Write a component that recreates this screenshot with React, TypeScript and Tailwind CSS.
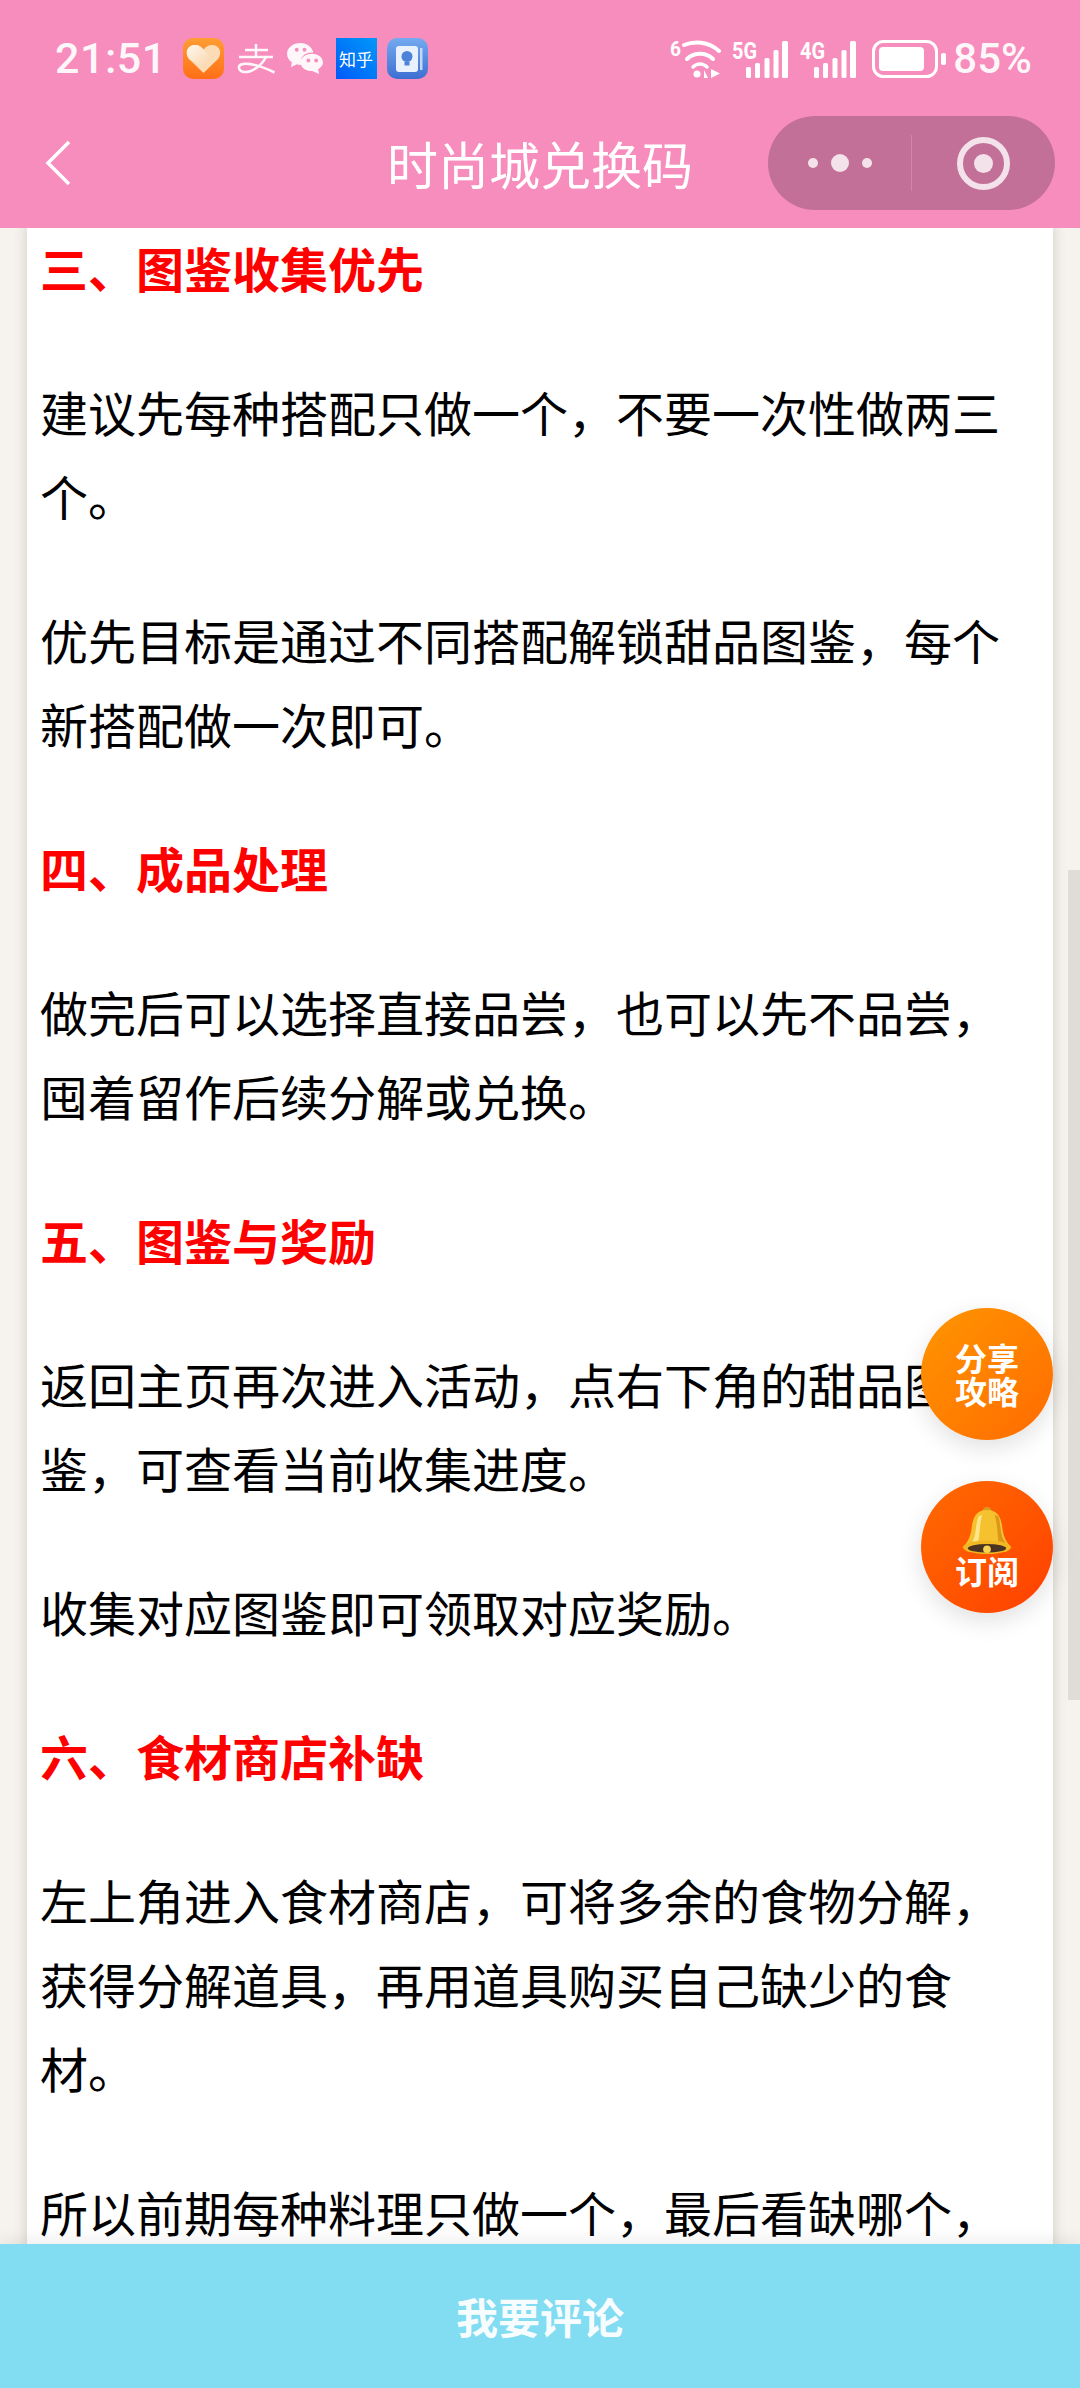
import React from "react";

const cjk = { fontFamily: '"Noto Sans CJK SC", "Noto Sans", sans-serif' };

type Block = { text: string; heading?: boolean };

const blocks: Block[] = [
  { text: "三、图鉴收集优先", heading: true },
  { text: "建议先每种搭配只做一个，不要一次性做两三个。" },
  { text: "优先目标是通过不同搭配解锁甜品图鉴，每个新搭配做一次即可。" },
  { text: "四、成品处理", heading: true },
  { text: "做完后可以选择直接品尝，也可以先不品尝，囤着留作后续分解或兑换。" },
  { text: "五、图鉴与奖励", heading: true },
  { text: "返回主页再次进入活动，点右下角的甜品图鉴，可查看当前收集进度。" },
  { text: "收集对应图鉴即可领取对应奖励。" },
  { text: "六、食材商店补缺", heading: true },
  { text: "左上角进入食材商店，可将多余的食物分解，获得分解道具，再用道具购买自己缺少的食材。" },
  { text: "所以前期每种料理只做一个，最后看缺哪个，再去兑换。" },
];

function AppIcons() {
  return (
    <div className="flex items-center">
      <svg width="41" height="41" viewBox="0 0 41 41">
        <defs>
          <linearGradient id="hg" x1="0" y1="0" x2="0" y2="1">
            <stop offset="0" stopColor="#ff9d33" />
            <stop offset="1" stopColor="#ff6f17" />
          </linearGradient>
          <linearGradient id="hw" x1="0" y1="0" x2="1" y2="1">
            <stop offset="0" stopColor="#fff8ef" />
            <stop offset="1" stopColor="#f9d3a6" />
          </linearGradient>
          <linearGradient id="nb" x1="0" y1="0" x2="0" y2="1">
            <stop offset="0" stopColor="#74aaf0" />
            <stop offset="1" stopColor="#3d6fd2" />
          </linearGradient>
        </defs>
        <rect width="41" height="41" rx="10" fill="url(#hg)" />
        <path d="M20.500 35 L6 21 C1 14 5 7 12 7 C16 7 19 9 20.500 12 C22 9 25 7 29 7 C36 7 40 14 35 21 Z" fill="#fbdcb6" />
        <path d="M12 7 C16 7 19 9 21 12 L29 21 L20.500 30 L6 21 C1 14 5 7 12 7 Z" fill="url(#hw)" />
      </svg>
      <svg width="38" height="30" viewBox="0 0 38 30" fill="none" stroke="#fff" strokeOpacity="0.92" strokeWidth="2.500" className="ml-[13px]">
        <path d="M8 6 H31" />
        <path d="M19 0 V13" />
        <path d="M2 13 H36" />
        <path d="M29 13 C25 21 15 29 7 28 C1 27 0 21 6 20 C13 19 26 23 37.500 28.500" />
      </svg>
      <svg width="37" height="33" viewBox="0 0 38 34" className="ml-[12px]">
        <path d="M14 1 C6 1 0 6 0 12 C0 16 2 19 5 21 L4 26 L10 23 C12 23.500 14 24 15 23 C12 16 19 10 27 11 C26 5 20 1 14 1 Z" fill="#fff" fillOpacity="0.92" />
        <path d="M26 12 C19 12 14 16 14 21 C14 26 19 30 26 30 L33 33 L32 28 C35 26 37 24 37 21 C37 16 32 12 26 12 Z" fill="#fff" fillOpacity="0.92" />
        <circle cx="10" cy="8" r="2" fill="#f78dbd" />
        <circle cx="18" cy="8" r="2" fill="#f78dbd" />
        <circle cx="22" cy="19" r="2" fill="#f78dbd" />
        <circle cx="30" cy="19" r="2" fill="#f78dbd" />
      </svg>
      <div
        className="ml-[12px] flex h-[41px] w-[41px] items-center justify-center bg-gradient-to-tr from-[#0058f8] to-[#0098f8] text-[17px] leading-none text-white"
        style={cjk}
      >
        知乎
      </div>
      <svg width="41" height="41" viewBox="0 0 41 41" className="ml-[10px]">
        <rect width="41" height="41" rx="10" fill="url(#nb)" />
        <rect x="9" y="8" width="22" height="26" rx="3" fill="#e8f1fc" />
        <rect x="33" y="10" width="2.500" height="22" fill="#c4d8f2" />
        <circle cx="20" cy="18.500" r="5.500" fill="#4d82d8" />
        <rect x="17.500" y="24" width="5" height="3.500" fill="#4d82d8" />
      </svg>
    </div>
  );
}

function NetIcon({ label, className }: { label: string; className: string }) {
  return (
    <svg width="56" height="37" viewBox="0 0 56 37" fill="#fff" className={className}>
      <text x="0" y="18" fontSize="24" fontWeight="700" fontFamily="Roboto" textLength="25" lengthAdjust="spacingAndGlyphs">
        {label}
      </text>
      <rect x="14" y="26" width="5" height="11" rx="1.500" />
      <rect x="23" y="22" width="5" height="15" rx="1.500" />
      <rect x="32.500" y="17" width="5" height="20" rx="1.500" />
      <rect x="41.500" y="9" width="5" height="28" rx="1.500" />
      <rect x="50" y="0" width="6" height="37" rx="1.500" />
    </svg>
  );
}

function StatusRight() {
  return (
    <div className="flex items-center text-white">
      <svg width="52" height="38" viewBox="0 0 52 38" fill="none" stroke="#fff">
        <text x="0" y="16" fontSize="21" fontWeight="700" fill="#fff" stroke="none" fontFamily="Roboto" textLength="11" lengthAdjust="spacingAndGlyphs">
          6
        </text>
        <path d="M14 5 C24 1 38 1 49 11" strokeWidth="4" strokeLinecap="round" />
        <path d="M17 19 C24 12 36 12 43 19" strokeWidth="4" strokeLinecap="round" />
        <path d="M23 27 C27 23 33 23 37 27" strokeWidth="3.500" strokeLinecap="round" />
        <circle cx="27" cy="34" r="3.500" fill="#fff" stroke="none" />
        <path d="M34 38 V30 L38 38 Z M41 29 V38 L50 33.500 Z" fill="#fff" stroke="none" />
      </svg>
      <NetIcon label="5G" className="ml-[10px]" />
      <NetIcon label="4G" className="ml-[12px]" />
      <svg width="74" height="38" viewBox="0 0 74 38" className="ml-[16px]" fill="none">
        <rect x="1.500" y="1.500" width="63" height="35" rx="10" stroke="#fff" strokeWidth="3" />
        <rect x="7" y="7" width="45" height="24" rx="4" fill="#fff" />
        <rect x="69" y="13" width="5" height="12" rx="2" fill="#fff" />
      </svg>
      <span className="ml-[7px] text-[42px] leading-none font-medium text-white/95" style={{ fontFamily: "Roboto, sans-serif" }}>
        85%
      </span>
    </div>
  );
}

function Header() {
  return (
    <header className="z-20 flex h-[228px] shrink-0 flex-col bg-[#f78dbd] text-white">
      <div className="flex h-[114px] items-end justify-between pr-[48px] pb-[34px] pl-[55px]">
        <div className="flex items-center gap-[16px]">
          <span className="text-[43px] leading-none font-medium tracking-[0.5px] text-white/95" style={{ fontFamily: "Roboto, sans-serif" }}>
            21:51
          </span>
          <AppIcons />
        </div>
        <StatusRight />
      </div>
      <div className="relative flex h-[98px] items-center justify-between pr-[25px] pl-[45px]">
        <svg width="26" height="46" viewBox="0 0 26 46" fill="none" stroke="#fff" strokeWidth="3.500">
          <path d="M24 2 L3 23 L24 44" />
        </svg>
        <h1 className="absolute inset-x-0 text-center text-[51px] leading-none font-normal" style={cjk}>
          时尚城兑换码
        </h1>
        <div className="relative flex h-[94px] w-[287px] items-center rounded-full bg-[#c27097]">
          <div className="flex flex-1 items-center justify-center gap-[13px]">
            <span className="h-[10px] w-[10px] rounded-full bg-[#f3e2ea]" />
            <span className="h-[18px] w-[18px] rounded-full bg-[#f3e2ea]" />
            <span className="h-[10px] w-[10px] rounded-full bg-[#f3e2ea]" />
          </div>
          <div className="h-[56px] w-px bg-[#cf86a9]" />
          <div className="flex flex-1 items-center justify-center">
            <div className="flex h-[53px] w-[53px] items-center justify-center rounded-full border-[6px] border-[#f3e2ea]">
              <span className="h-[19px] w-[19px] rounded-full bg-[#f3e2ea]" />
            </div>
          </div>
        </div>
      </div>
    </header>
  );
}

function Bell() {
  return (
    <svg width="50" height="48" viewBox="0 0 52 50">
      <circle cx="26" cy="5" r="5" fill="#d99a22" />
      <path d="M26 3 C14 3 11 12 10 22 C9 31 6 36 2 41 L50 41 C46 36 43 31 42 22 C41 12 38 3 26 3 Z" fill="#f6c12f" />
      <path d="M17 10 C14 18 15 30 10 38 L16 38 C19 30 18 18 21 8 Z" fill="#fde68a" />
      <path d="M38 10 C41 20 39 31 46 38 L38 38 C37 30 37 18 34 8 Z" fill="#d9971c" />
      <ellipse cx="26" cy="42" rx="25" ry="7" fill="#f2b824" />
      <ellipse cx="26" cy="43" rx="20" ry="4.500" fill="#4a3323" />
      <circle cx="26" cy="44" r="4" fill="#f7d251" />
    </svg>
  );
}

function FloatButtons() {
  return (
    <div className="absolute top-[1308px] right-[27px] z-10 flex flex-col gap-[41px]" style={cjk}>
      <div className="flex h-[132px] w-[132px] flex-col items-center justify-center rounded-full bg-gradient-to-br from-[#ff9500] to-[#ff6a00] text-[32px] leading-[33px] font-bold text-white shadow-[0_8px_24px_rgba(0,0,0,0.12)]">
        <span>分享</span>
        <span>攻略</span>
      </div>
      <div className="flex h-[132px] w-[132px] flex-col items-center justify-center rounded-full bg-gradient-to-br from-[#ff6a00] to-[#ff3d00] text-[32px] leading-[33px] font-bold text-white shadow-[0_8px_24px_rgba(0,0,0,0.12)]">
        <Bell />
        <span className="-mt-[1px]">订阅</span>
      </div>
    </div>
  );
}

export default function App() {
  return (
    <div className="relative flex h-[2388px] w-[1080px] flex-col overflow-hidden bg-[#f6f3ee]" style={cjk}>
      <Header />
      <main className="relative min-h-0 flex-1 overflow-hidden">
        <div className="mx-[27px] -mt-[3px] bg-white px-[13px] shadow-[0_0_12px_rgba(90,80,70,0.25)]">
          {blocks.map((b, i) => (
            <p
              key={i}
              className={
                b.heading
                  ? "mb-[60px] text-[48px] leading-[84px] font-bold text-[#ff0000]"
                  : "mb-[60px] text-[48px] leading-[84px] text-black"
              }
            >
              {b.text}
            </p>
          ))}
        </div>
      </main>
      <div className="absolute top-[870px] right-0 h-[830px] w-[12px] bg-[#e0ddd9]" />
      <FloatButtons />
      <footer className="z-20 flex h-[144px] shrink-0 items-center justify-center bg-[#82dcf2] text-[42px] leading-none font-bold text-white/95 shadow-[0_-6px_14px_rgba(0,0,0,0.06)]">
        我要评论
      </footer>
    </div>
  );
}
